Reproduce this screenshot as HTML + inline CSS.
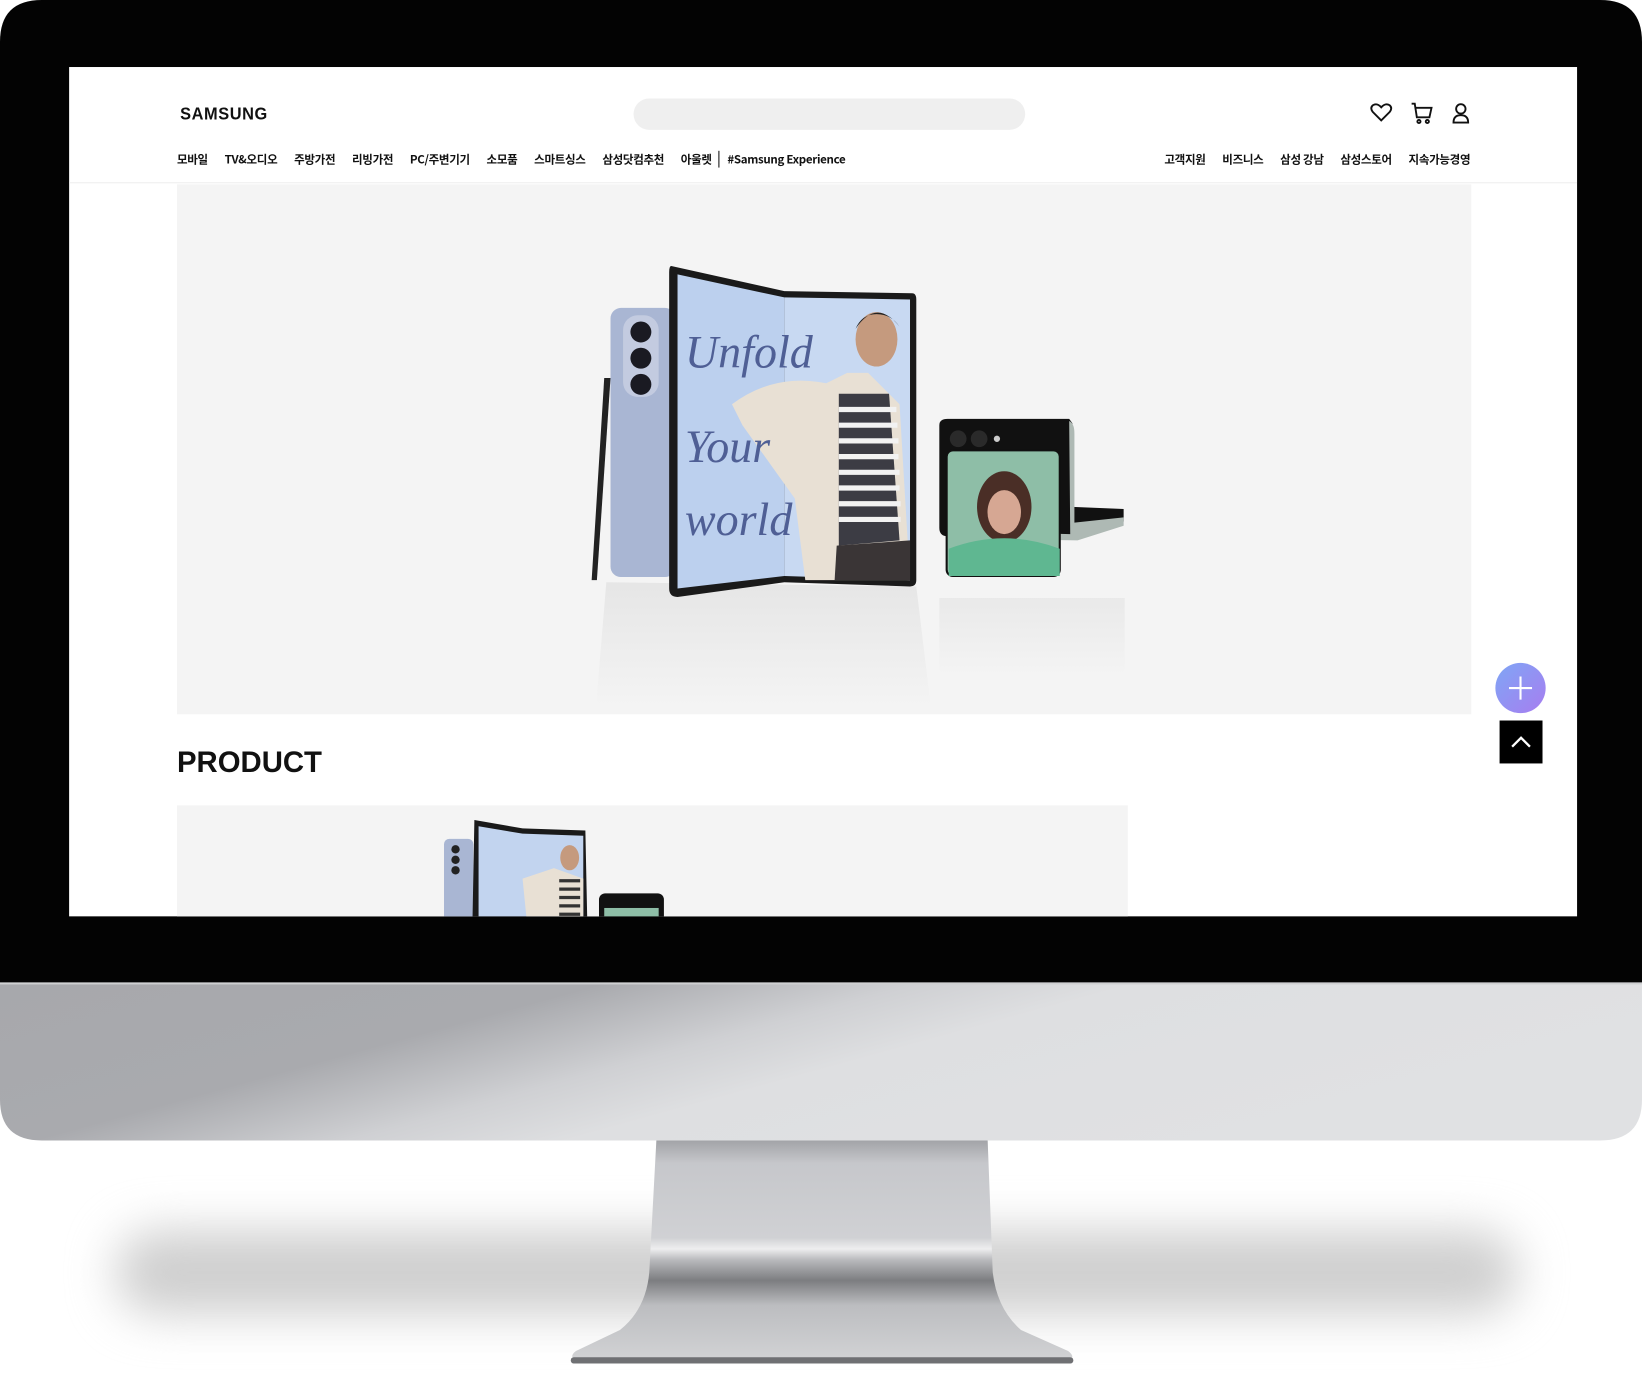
<!DOCTYPE html>
<html><head><meta charset="utf-8"><style>
html,body{margin:0;padding:0;width:1642px;height:1374px;overflow:hidden;background:#fff}
#w{position:absolute;left:0;top:0;width:1568px;height:1312px;transform:scale(1.04719,1.04726);transform-origin:0 0;font-family:"Liberation Sans","Noto Sans CJK KR",sans-serif}
.a{position:absolute}
.nav{position:absolute;top:80px;font-size:11px;font-weight:bold;color:#111;white-space:nowrap;letter-spacing:-0.3px;font-family:"Noto Sans CJK KR","Liberation Sans",sans-serif;line-height:16px}
.nav span{margin-right:16px}
</style></head><body><div id="w">
<div class="a" style="left:110px;top:1175px;width:1340px;height:80px;background:#cfcfcf;filter:blur(22px);border-radius:40px"></div>
<svg class="a" style="left:0;top:0" width="1568" height="1312">
<defs>
<linearGradient id="st" x1="0" y1="0" x2="0" y2="1">
<stop offset="0" stop-color="#9c9da1"/><stop offset="0.12" stop-color="#c6c7cb"/><stop offset="0.45" stop-color="#d0d1d4"/><stop offset="0.5" stop-color="#eeeeef"/><stop offset="0.55" stop-color="#b8b9bc"/><stop offset="0.64" stop-color="#7c7d80"/><stop offset="0.75" stop-color="#bcbdc0"/><stop offset="1" stop-color="#d2d3d5"/></linearGradient>
<linearGradient id="ch" x1="0" y1="0" x2="1" y2="0.35">
<stop offset="0" stop-color="#a7a8ac"/><stop offset="0.33" stop-color="#a9aaae"/><stop offset="0.5" stop-color="#cfd0d3"/><stop offset="0.62" stop-color="#dedfe1"/><stop offset="1" stop-color="#e0e1e3"/></linearGradient>
</defs>
<path d="M627 1085 L943 1085 L948 1215 Q952 1250 975 1270 L1020 1290 Q1028 1296 1020 1300 L552 1300 Q542 1296 550 1290 L592 1270 Q617 1250 620 1215 Z" fill="url(#st)"/>
<rect x="545" y="1296" width="480" height="6" rx="3" fill="#6f7073"/>
<path d="M0 938 L1568 938 L1568 1050 Q1568 1089 1528 1089 L40 1089 Q0 1089 0 1050 Z" fill="url(#ch)"/>
<rect x="0" y="938" width="1568" height="2" fill="#cfd0d2"/>
<path d="M40 0 L1528 0 Q1568 0 1568 40 L1568 938 L0 938 L0 40 Q0 0 40 0 Z" fill="#030303"/>
</svg>
<div class="a" style="left:66px;top:64px;width:1440px;height:811px;background:#fff;overflow:hidden">
<div class="a" style="left:106px;top:35px;font-size:17px;font-weight:bold;letter-spacing:0.6px;color:#111;transform:scaleX(0.92);transform-origin:0 0">SAMSUNG</div>
<div class="a" style="left:539px;top:30px;width:374px;height:30px;border-radius:15px;background:#efefef"></div>
<svg class="a" style="left:1240px;top:32px" width="110" height="24" fill="none" stroke="#111" stroke-width="1.8">
<path d="M13 19 L5 11 Q2 7 5 4.5 Q9 2 13 6.5 Q17 2 21 4.5 Q24 7 21 11 Z"/>
<path d="M42 3 L45 3 L47 16 L59 16 L61 7 L46 7"/><circle cx="49" cy="20" r="1.5"/><circle cx="57" cy="20" r="1.5"/>
<circle cx="89" cy="8" r="4.5"/><path d="M82 21 Q82 14 89 14 Q96 14 96 21 Z"/>
</svg>
<div class="nav" style="left:103px"><span>모바일</span><span>TV&amp;오디오</span><span>주방가전</span><span>리빙가전</span><span>PC/주변기기</span><span>소모품</span><span>스마트싱스</span><span>삼성닷컴추천</span><span style="margin-right:6px">아울렛</span><span style="border-left:1px solid #111;padding-left:8px">#Samsung Experience</span></div>
<div class="nav" style="right:102px"><span>고객지원</span><span>비즈니스</span><span>삼성 강남</span><span>삼성스토어</span><span style="margin-right:0">지속가능경영</span></div>
<div class="a" style="left:0;top:110px;width:1440px;height:1px;background:#eee"></div>
<div class="a" style="left:103px;top:112px;width:1236px;height:506px;background:#f4f4f4">
<svg width="1236" height="506">
<defs><linearGradient id="rf" x1="0" y1="0" x2="0" y2="1"><stop offset="0" stop-color="#e2e2e2"/><stop offset="1" stop-color="#f4f4f4"/></linearGradient></defs>
<path d="M410 380 L706 384 L720 500 L400 500Z" fill="url(#rf)" opacity="0.8"/>
<path d="M728 395 L905 395 L905 470 L728 470Z" fill="url(#rf)" opacity="0.6"/>
<rect x="414" y="118" width="62" height="257" rx="10" fill="#a9b6d3"/>
<rect x="426" y="125" width="34" height="78" rx="14" fill="#c3cbe0"/>
<circle cx="443" cy="141" r="10" fill="#1a1a22"/><circle cx="443" cy="166" r="10" fill="#1a1a22"/><circle cx="443" cy="191" r="10" fill="#1a1a22"/>
<path d="M408 185 L414 185 L401 378 L396 378 Z" fill="#222"/>
<path d="M472 78 L580 102 L702 104 Q706 104 706 110 L706 378 Q706 384 700 384 L580 380 L478 394 Q470 394 470 386 L470 84 Q470 78 472 78 Z" fill="#1a1a1a"/>
<path d="M478 86 L580 108 L580 374 L478 386 Z" fill="#bcd0ee"/>
<path d="M580 108 L700 110 L700 378 L580 374 Z" fill="#c8d9f2"/>
<path d="M530 210 Q570 180 620 190 L640 180 L660 180 L690 210 L700 378 L600 378 L590 300 L540 230 Z" fill="#e8e0d4"/>
<path d="M632 200 L680 200 L690 340 L632 345 Z" fill="#3c3c44"/>
<path d="M632 215 h55 M632 230 h56 M632 245 h57 M632 260 h57 M632 275 h58 M632 290 h58 M632 305 h59 M632 320 h59" stroke="#f2f2f2" stroke-width="5"/>
<ellipse cx="668" cy="148" rx="20" ry="26" fill="#c59a7e"/>
<path d="M648 138 Q668 108 690 136 Q682 124 668 124 Q654 124 648 138Z" fill="#222"/>
<path d="M630 345 L700 340 L700 378 L628 378 Z" fill="#3a3536"/>
<text x="485" y="175" font-family="Liberation Serif,serif" font-style="italic" font-size="44" fill="#4f5f95">Unfold</text>
<text x="485" y="265" font-family="Liberation Serif,serif" font-style="italic" font-size="44" fill="#4f5f95">Your</text>
<text x="485" y="335" font-family="Liberation Serif,serif" font-style="italic" font-size="44" fill="#4f5f95">world</text>
<g transform="translate(0,-62)">
<path d="M728 292 Q728 286 736 286 L852 286 L855 290 L855 370 L904 372 L904 384 L860 400 L736 398 Q728 398 728 390 Z" fill="#111"/>
<path d="M852 288 Q857 290 857 300 L857 385 L904 380 L904 388 L860 402 L735 400 L735 393 L853 396Z" fill="#aeb9b4"/>
<rect x="735" y="316" width="108" height="120" rx="6" fill="#8ebea7"/>
<rect x="735" y="316" width="108" height="120" rx="6" fill="none" stroke="#111" stroke-width="2"/>
<ellipse cx="790" cy="370" rx="26" ry="34" fill="#4a2e26"/>
<ellipse cx="790" cy="375" rx="16" ry="21" fill="#d6a793"/>
<path d="M737 410 Q790 390 843 410 L843 436 L737 436 Z" fill="#5fb791"/>
<circle cx="746" cy="305" r="8" fill="#2a2a2a"/><circle cx="766" cy="305" r="8" fill="#2a2a2a"/><circle cx="783" cy="305" r="3" fill="#ccc"/>
</g>
</svg>
</div>
<div class="a" style="left:103px;top:648px;font-size:28px;font-weight:bold;color:#111">PRODUCT</div>
<div class="a" style="left:103px;top:705px;width:908px;height:120px;background:#f4f4f4;overflow:hidden">
<svg width="908" height="120">
<rect x="255" y="32" width="28" height="100" rx="5" fill="#a9b6d3"/>
<circle cx="266" cy="42" r="4" fill="#222"/><circle cx="266" cy="52" r="4" fill="#222"/><circle cx="266" cy="62" r="4" fill="#222"/>
<path d="M284 14 L330 22 L390 24 L392 120 L282 120 Z" fill="#1a1a1a"/>
<path d="M288 20 L330 27 L388 29 L388 120 L288 120Z" fill="#c2d4ef"/>
<path d="M330 70 L360 60 L388 70 L388 120 L335 120Z" fill="#e8e0d4"/>
<path d="M365 72 h20 M365 80 h20 M365 88 h20 M365 96 h20 M365 104 h20" stroke="#333" stroke-width="3"/>
<ellipse cx="375" cy="50" rx="9" ry="12" fill="#c59a7e"/>
<rect x="403" y="84" width="62" height="40" rx="6" fill="#111"/>
<rect x="408" y="98" width="52" height="22" fill="#8ebea7"/>
</svg>
</div>
<div class="a" style="left:1362px;top:569px;width:48px;height:48px;border-radius:50%;background:linear-gradient(135deg,#7fa6f5,#a77df0)"><svg width="48" height="48" stroke="#fff" stroke-width="2"><path d="M24 13V35M13 24H35"/></svg></div>
<div class="a" style="left:1366px;top:624px;width:41px;height:41px;background:#000"><svg width="41" height="41" fill="none" stroke="#fff" stroke-width="2.2"><path d="M12 25 L20.5 16.5 L29 25"/></svg></div>
</div>
</div></body></html>
